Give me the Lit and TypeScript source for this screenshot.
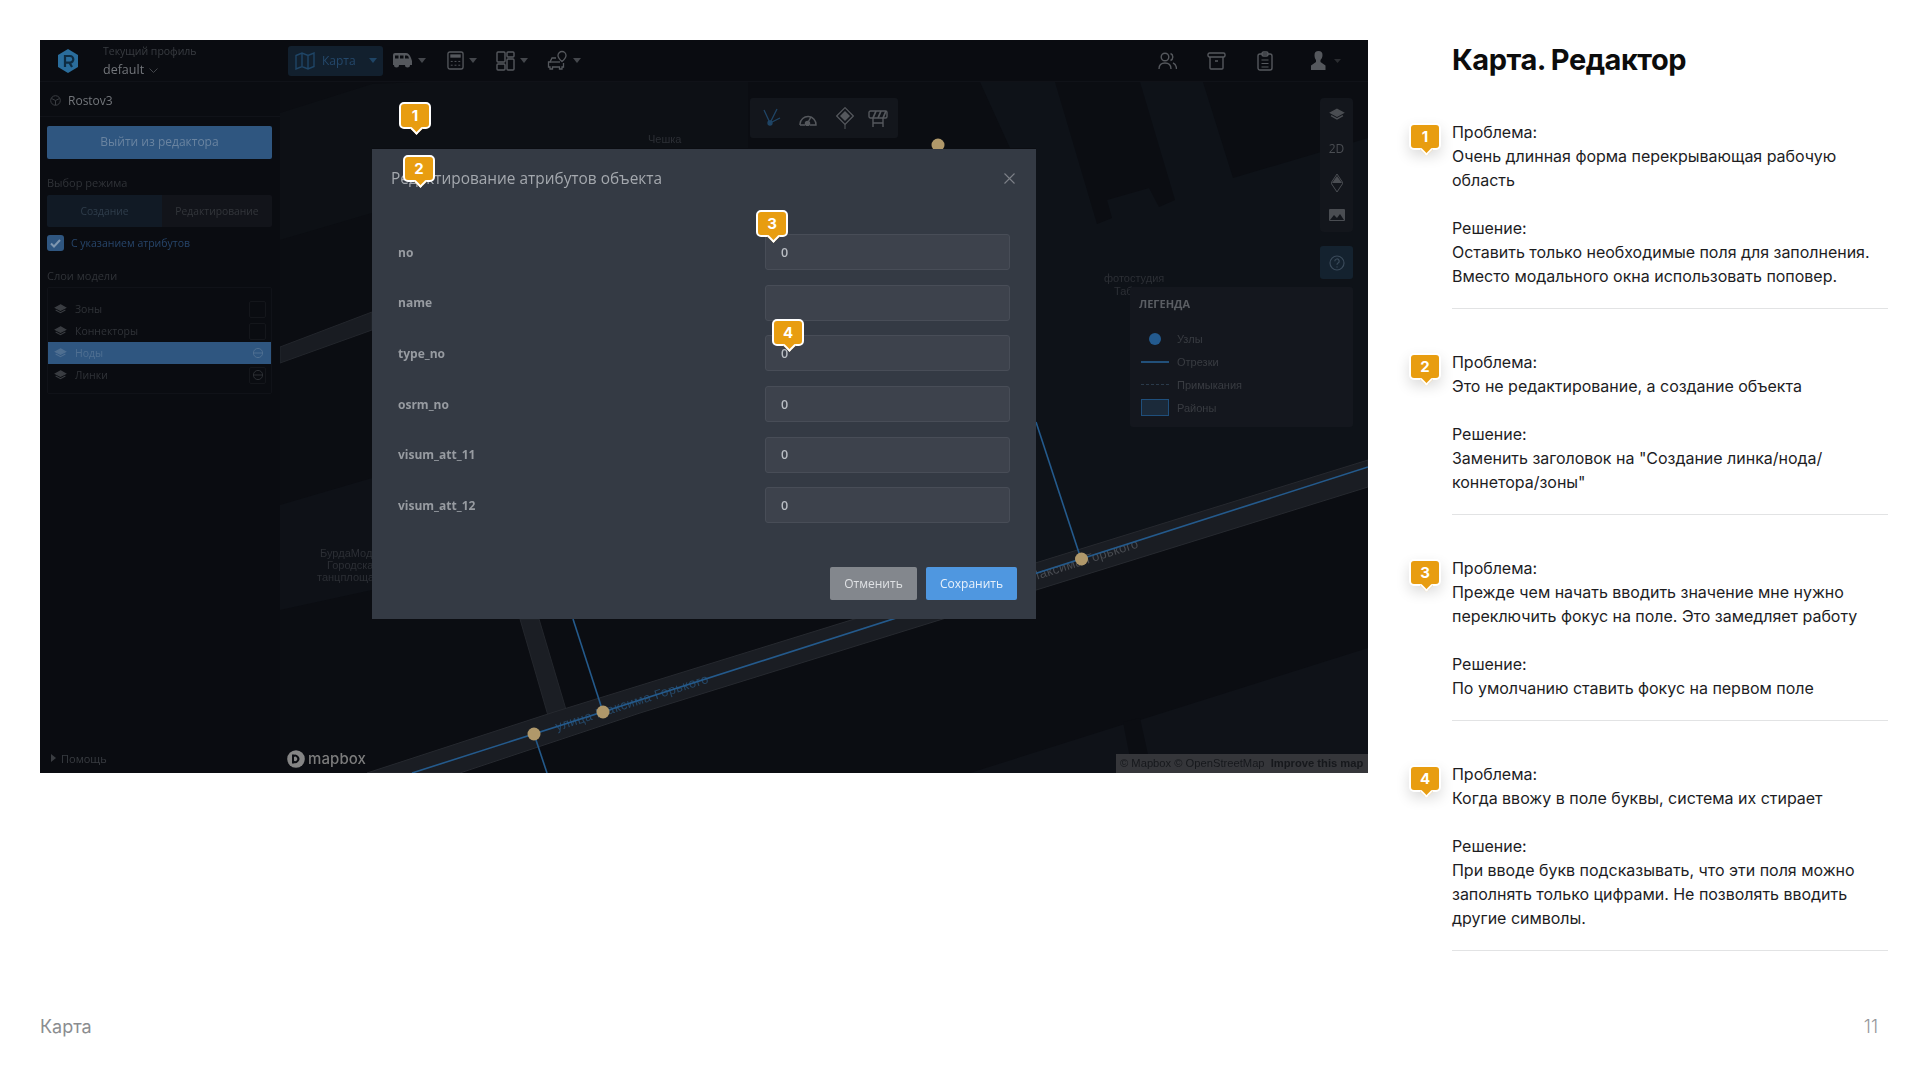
import { LitElement, html, css, svg } from "lit";
import { customElement } from "lit/decorators.js";

const SECTIONS = [
  { n: 1, lines: ["Проблема:", "Очень длинная форма перекрывающая рабочую", "область", "", "Решение:", "Оставить только необходимые поля для заполнения.", "Вместо модального окна использовать поповер."] },
  { n: 2, lines: ["Проблема:", "Это не редактирование, а создание объекта", "", "Решение:", "Заменить заголовок на \"Создание линка/нода/", "коннетора/зоны\""] },
  { n: 3, lines: ["Проблема:", "Прежде чем начать вводить значение мне нужно", "переключить фокус на поле. Это замедляет работу", "", "Решение:", "По умолчанию ставить фокус на первом поле"] },
  { n: 4, lines: ["Проблема:", "Когда ввожу в поле буквы, система их стирает", "", "Решение:", "При вводе букв подсказывать, что эти поля можно", "заполнять только цифрами. Не позволять вводить", "другие символы."] },
];

const FIELDS = [
  ["no", "0"], ["name", ""], ["type_no", "0"], ["osrm_no", "0"], ["visum_att_11", "0"], ["visum_att_12", "0"],
];

const LAYERS = [
  { name: "Зоны", sel: false, eye: false },
  { name: "Коннекторы", sel: false, eye: false },
  { name: "Ноды", sel: true, eye: true },
  { name: "Линки", sel: false, eye: true },
];

const layersIcon = (c: string, s = 14) => html`<svg width=${s} height=${s} viewBox="0 0 14 14" fill="none" stroke=${c} stroke-width="1.3"><path d="M7 2 L12.5 5 L7 8 L1.5 5 Z" fill=${c}/><path d="M1.8 7.6 L7 10.4 L12.2 7.6"/></svg>`;
const eyeIcon = (c: string) => html`<svg width="12" height="12" viewBox="0 0 12 12" fill="none" stroke=${c} stroke-width="1"><circle cx="6" cy="6" r="4.6"/><path d="M1.4 6h9.2"/></svg>`;
const caret = (c: string) => html`<svg class="caret" width="8" height="5" viewBox="0 0 8 5"><path d="M0 0h8L4 5z" fill=${c}/></svg>`;

const mapSvg = svg`
  <rect x="280" y="82" width="1088" height="691" fill="#0b0d12"/>
  <polygon points="280,113 372,84 420,82 748,82 748,148 372,148 372,213 280,240" fill="#0d1015"/>
  <polygon points="280,505 372,478 372,590 280,610" fill="#0e1117"/>
  <polygon points="980,82 1368,82 1368,460 1036,565 1036,148 1010,148" fill="#0e1218"/>
  <polygon points="1055,82 1140,82 1175,200 1159,207 1149,188 1107,200 1112,218 1097,224" fill="#0b0d12"/>
  <polygon points="1203,82 1233,178 1368,138 1368,82" fill="#0b0d12"/>
  <polygon points="1368,648 1140,720 1128,723 970,773 1368,773" fill="#0f1218"/>
  <polygon points="1123,722 1140,718 1152,773 1133,773" fill="#0b0d12"/>
  <polygon points="280,347 372,312 372,330 280,363" fill="#191c22" stroke="#23262c" stroke-width="1"/>
  <polygon points="520,619 539,619 567,713 549,719" fill="#1b1e24" stroke="#23262c" stroke-width="1"/>
  <polygon points="1368,460 551,713 367,773 460,773 640,713 1368,487" fill="#1a1d23" stroke="#26292f" stroke-width="1"/>
  <g font-family="'Liberation Sans',sans-serif" font-size="13">
    <text transform="translate(557 731) rotate(-17.7)" fill="#254766" letter-spacing=".5">улица Максима Горького</text>
    <text transform="translate(1030 582) rotate(-17.7)" fill="#484b51" letter-spacing=".3">Максима Горького</text>
  </g>
  <g stroke="#245a8c" stroke-width="1.6" fill="none">
    <path d="M1368 467 L412 773"/>
    <path d="M1036 422 L1081 559"/>
    <path d="M573 619 L603 712"/>
    <path d="M534 734 L547 773"/>
  </g>
  <g fill="#b0986a">
    <circle cx="1081.5" cy="559" r="6.5"/>
    <circle cx="603" cy="712" r="6.5"/>
    <circle cx="534" cy="734" r="6.5"/>
    <circle cx="938" cy="145" r="6.5"/>
  </g>
  <g font-family="'Liberation Sans',sans-serif" font-size="11" fill="#2c2f35">
    <text x="648" y="143">Чешка</text>
    <text x="1104" y="282">фотостудия</text>
    <text x="1114" y="295">Таб</text>
    <text x="320" y="557">БурдаМода</text>
    <text x="327" y="569">Городская</text>
    <text x="317" y="581">танцплощадка</text>
  </g>
`;

@customElement("app-root")
export class AppRoot extends LitElement {
  static styles = css`
    :host { display: block; }
    * { box-sizing: border-box; }
    .page { width: 1920px; height: 1080px; background: #fff; display: flex; flex-direction: column; padding: 40px 32px 0 40px; overflow: hidden; }
    .top { display: flex; flex: 1; min-height: 0; }
    .app { width: 1328px; height: 733px; flex: none; position: relative; background: #0b0d12; display: flex; flex-direction: column; overflow: hidden; font-family: "Open Sans", sans-serif; }
    .blur { filter: blur(.45px); display: flex; flex-direction: column; width: 100%; height: 100%; }

    .topbar { height: 42px; flex: none; background: #0a0c11; border-bottom: 1px solid #101218; display: flex; align-items: center; }
    .logo { width: 22px; margin-left: 18px; display: flex; }
    .profile { margin-left: 23px; width: 185px; line-height: 1; padding-top: 1px; }
    .profile .cap { font-size: 10.5px; color: #393c41; height: 15px; }
    .profile .def { font-size: 12.5px; color: #73767b; display: flex; align-items: center; gap: 5px; margin-top: 3px; }
    .nav { display: flex; align-items: center; height: 100%; }
    .karta { width: 95px; height: 30px; background: #12202e; border-radius: 3px; display: flex; align-items: center; padding-left: 7px; gap: 7px; color: #24486b; font-size: 12px; }
    .karta .caret { margin-left: 6px; }
    .nav-i { display: flex; align-items: center; gap: 5px; }
    .right-icons { margin-left: auto; display: flex; align-items: center; }

    .body { flex: 1; display: flex; min-height: 0; }
    .side { width: 240px; flex: none; background: #0a0c11; display: flex; flex-direction: column; padding-bottom: 7px; z-index: 1; }
    .rost { height: 35px; border-bottom: 1px solid #101218; display: flex; align-items: center; padding: 2px 0 0 10px; gap: 7px; font-size: 12px; color: #73767b; }
    .exit { margin: 9px 8px 0 7px; height: 33px; background: #2f5680; border-radius: 2px; display: flex; align-items: center; justify-content: center; padding-bottom: 2px; font-size: 12px; font-weight: 500; color: #6a84a0; }
    .lab { margin: 16px 0 0 7px; font-size: 11px; line-height: 16px; color: #303338; }
    .seg { margin: 4px 8px 0 7px; height: 32px; display: flex; font-size: 10.3px; border-radius: 2px; overflow: hidden; }
    .seg div { display: flex; align-items: center; justify-content: center; }
    .seg .a { width: 115px; background: #111a25; color: #2f3d4b; }
    .seg .b { flex: 1; background: #12141a; color: #33363b; }
    .chk { margin: 8px 0 0 7px; height: 16px; display: flex; align-items: center; gap: 7px; font-size: 10.5px; color: #27456a; }
    .box { width: 17px; height: 16px; border-radius: 3px; background: #2f5680; display: flex; align-items: center; justify-content: center; }
    .lab2 { margin-top: 17px; }
    .panel { margin: 3px 8px 0 7px; height: 107px; border: 1px solid #101218; border-radius: 2px; padding-top: 10px; }
    .row { height: 22px; display: flex; align-items: center; padding-left: 6px; gap: 8px; font-size: 10.5px; color: #303338; }
    .row.sel { background: #2f5680; color: #4f6f91; }
    .sq { margin-left: auto; margin-right: 5px; width: 17px; height: 17px; border: 1px solid #14161b; border-radius: 2px; display: flex; align-items: center; justify-content: center; }
    .row.sel .sq { border-color: transparent; }
    .help { margin-top: auto; padding-left: 11px; display: flex; align-items: center; gap: 5px; font-size: 11px; color: #393c41; height: 16px; }

    .map { flex: 1; position: relative; overflow: hidden; }
    .map > svg.bg { position: absolute; inset: 0; display: block; }
    .logo-mb { position: absolute; left: 7px; bottom: 5px; display: flex; align-items: center; gap: 3px; color: #7c7c7c; font: 500 15px "Inter", sans-serif; letter-spacing: .1px; }
    .attr { position: absolute; right: 0; bottom: 0; height: 19px; width: 252px; background: #35363a; color: #16181c; font: 11.2px/19px "Liberation Sans", sans-serif; padding-left: 4px; white-space: nowrap; }
    .attr b { margin-left: 3px; }
    .tool { position: absolute; left: 470px; top: 16px; width: 148px; height: 40px; background: #13161c; border-radius: 3px; display: flex; align-items: center; padding-left: 12px; }
    .rtool { position: absolute; left: 1040px; top: 16px; width: 33px; height: 134px; background: #13161c; border-radius: 4px; display: flex; flex-direction: column; align-items: center; justify-content: space-around; padding: 0 0 2px; color: #4a4d52; font-size: 12px; }
    .help-b { position: absolute; left: 1040px; top: 164px; width: 33px; height: 33px; background: #14222f; border-radius: 3px; display: flex; align-items: center; justify-content: center; }
    .legend { position: absolute; left: 850px; top: 205px; width: 223px; height: 140px; background: #14171e; border-radius: 3px; padding: 10px 9px; }
    .legend h4 { margin: 0 0 16px; font: 700 11px/14px "Open Sans", sans-serif; color: #5a5d63; }
    .lg { height: 23px; display: flex; align-items: center; font: 11px "Liberation Sans", sans-serif; color: #393c42; }
    .lg .k { width: 38px; display: flex; align-items: center; justify-content: center; padding-left: 2px; padding-right: 8px; flex: none; }
    .dot { width: 12px; height: 12px; border-radius: 50%; background: #235a8e; }
    .ln { width: 28px; height: 0; border-top: 2px solid #22507a; }
    .dsh { width: 28px; height: 0; border-top: 1px dashed #2a3a4a; }
    .rc { width: 28px; height: 17px; border: 1px solid #1f4f7c; background: #1b2a3a; }

    .modal { position: absolute; left: 92px; top: 67px; width: 664px; height: 470px; background: #343a44; display: flex; flex-direction: column; z-index: 2; }
    .mh { height: 85px; flex: none; display: flex; justify-content: space-between; padding: 19px 21px 0 19px; }
    .mt { font-size: 15.4px; line-height: 22px; font-weight: 500; color: #a4a8ae; }
    .fields { padding-left: 26px; padding-right: 26px; display: grid; grid-template-columns: 367px 245px; row-gap: 14.7px; align-items: center; }
    .fields label { font-size: 12px; font-weight: 700; color: #979ba1; }
    .inp { height: 36px; background: #3d424c; border: 1px solid #484d57; border-radius: 3px; display: flex; align-items: center; padding-left: 15px; font-size: 12.5px; font-weight: 600; color: #b8bcc2; }
    .btns { margin-top: 44px; padding-right: 19px; display: flex; justify-content: flex-end; gap: 9px; }
    .btn { height: 33px; display: flex; align-items: center; justify-content: center; font-size: 12px; font-weight: 500; border-radius: 2px; }
    .c { width: 87px; background: #83878d; color: #dfe1e4; }
    .s { width: 91px; background: #4f97e0; color: #e8f1fb; }

    .mk { position: absolute; width: 32px; height: 27px; background: #e89d10; border: 2px solid #fff; border-radius: 5px; color: #fff; font: 700 15px/23px "Inter", sans-serif; text-align: center; z-index: 5; }
    .mk::after { content: ""; position: absolute; left: 50%; bottom: -6px; width: 7px; height: 7px; margin-left: -3.5px; background: #e89d10; border-right: 2px solid #fff; border-bottom: 2px solid #fff; transform: rotate(45deg); box-sizing: content-box; }
    .mk span { position: relative; z-index: 1; }

    aside { margin-left: 84px; width: 436px; font-family: "Inter", sans-serif; color: #1d1d1f; }
    h1 { margin: 2px 0 42px; font: 700 29px/36px "Inter", sans-serif; color: #0c0c0c; letter-spacing: -.5px; word-spacing: -.5px; }
    .sec { position: relative; padding-bottom: 20px; border-bottom: 1.5px solid #e2e3e4; margin-bottom: 41px; font-size: 16px; line-height: 24px; letter-spacing: -.02px; }
    .sec .mk { left: -43px; top: 3px; box-shadow: 0 6px 14px rgba(0,0,0,.14); }
    .ln-t { height: 24px; white-space: nowrap; }
    .foot { height: 65px; padding-right: 10px; display: flex; justify-content: space-between; font: 18px/24px "Inter", sans-serif; color: #8b8d90; }
    .foot .pg { color: #94969a; font-weight: 300; }
  `;

  private mk(n: number, l: number | null = null, t: number | null = null) {
    const st = l === null ? "" : `left:${l}px;top:${t}px`;
    return html`<div class="mk" style=${st}><span>${n}</span></div>`;
  }

  render() {
    const g = "#55585d";
    return html`
      <div class="page">
        <div class="top">
          <div class="app">
            <div class="blur">
              <div class="topbar">
                <div class="logo">
                  <svg width="20" height="24" viewBox="0 0 20 24"><path d="M10 0 L20 6 V18 L10 24 L0 18 V6 Z" fill="#2a6d9c"/><path d="M7 18V7h5a3.2 3.2 0 0 1 0 6.6H8M11 13l3 5" stroke="#0e2c42" stroke-width="2.2" fill="none"/></svg>
                </div>
                <div class="profile">
                  <div class="cap">Текущий профиль</div>
                  <div class="def">default <svg width="9" height="5" viewBox="0 0 9 5" fill="none" stroke="#44474c"><path d="M.5.5 4.5 4.5 8.5.5"/></svg></div>
                </div>
                <div class="nav">
                  <div class="karta">
                    <svg width="20" height="18" viewBox="0 0 20 18" fill="none" stroke="#1f4566" stroke-width="1.4"><path d="M1 3.5 7 1l6 2.5L19 1v13.5L13 17l-6-2.5L1 17zM7 1v13.5M13 3.5V17"/></svg>
                    <span>Карта</span>${caret("#1f4566")}
                  </div>
                  <div class="nav-i" style="margin-left:9px">
                    <svg width="21" height="17" viewBox="0 0 21 17"><path d="M1 3q0-2 2-2h11q3 0 5 5l1 3v4h-2a2.5 2.5 0 0 1-5 0H7a2.5 2.5 0 0 1-5 0H1z" fill=${g}/><path d="M3 3.500h3.500v3H3zM8 3.500h3.500v3H8zM13 3.500h2q1.500 0 2 3h-4z" fill="#0a0c11"/></svg>${caret("#44474c")}
                  </div>
                  <div class="nav-i" style="margin-left:21px">
                    <svg width="17" height="19" viewBox="0 0 18 20" fill="none" stroke=${g} stroke-width="1.4"><rect x="1" y="1" width="16" height="18" rx="2"/><rect x="3.500" y="3.500" width="11" height="3.500" fill=${g} stroke="none"/><path d="M4 11h2M8 11h2M12 11h2M4 15h2M8 15h2M12 15h2" stroke-width="1"/></svg>${caret("#44474c")}
                  </div>
                  <div class="nav-i" style="margin-left:19px">
                    <svg width="19" height="20" viewBox="0 0 19 20" fill="none" stroke=${g} stroke-width="1.4"><rect x="1" y="1" width="8" height="10" rx="1"/><rect x="11" y="1" width="7" height="5" rx="1"/><rect x="1" y="13" width="8" height="6" rx="1"/><rect x="11" y="8" width="7" height="11" rx="1"/></svg>${caret("#44474c")}
                  </div>
                  <div class="nav-i" style="margin-left:19px">
                    <svg width="21" height="21" viewBox="0 0 21 21" fill="none" stroke=${g} stroke-width="1.3"><path d="M15 1.500a4 4 0 0 1 4 4c0 2.500-4 6-4 6s-4-3.500-4-6a4 4 0 0 1 4-4z"/><path d="M9 8H5L3 12H1.500v5H3v2h2.500v-2h7v2H15v-2h1.500v-4"/><path d="M3 12h10"/></svg>${caret("#44474c")}
                  </div>
                </div>
                <div class="right-icons">
                  <svg style="margin-right:30px" width="19" height="18" viewBox="0 0 19 18" fill="none" stroke=${g} stroke-width="1.4"><circle cx="7" cy="5" r="3.800"/><path d="M1 17c0-4 2.500-6 6-6s6 2 6 6M12.500 1.500a3.800 3.800 0 0 1 0 7M15 11c2 .8 3.500 3 3.500 6"/></svg>
                  <svg style="margin-right:31px" width="19" height="18" viewBox="0 0 19 18" fill="none" stroke=${g} stroke-width="1.4"><rect x="1" y="1" width="17" height="4" rx="1.500"/><path d="M3 5v11a1 1 0 0 0 1 1h11a1 1 0 0 0 1-1V5M8 9h3"/></svg>
                  <svg style="margin-right:37px" width="16" height="20" viewBox="0 0 16 20" fill="none" stroke=${g} stroke-width="1.4"><rect x="1" y="3" width="14" height="16" rx="2"/><rect x="5" y="1" width="6" height="4" rx="1.500"/><path d="M4.500 9h7M4.500 12.500h7M4.500 16h7" stroke-width="1"/></svg>
                  <svg style="margin-right:7px" width="17" height="19" viewBox="0 0 17 19"><path d="M8.500 0a4 4 0 0 1 4 4c0 2-.8 4-2 5v2l5 3.500V19H1v-4.500L6 11V9C5 8 4.500 6 4.500 4a4 4 0 0 1 4-4z" fill=${g}/></svg>
                  <svg style="margin-right:27px" width="7" height="4" viewBox="0 0 7 4"><path d="M0 0h7L3.500 4z" fill="#2a2c30"/></svg>
                </div>
              </div>
              <div class="body">
                <div class="side">
                  <div class="rost">
                    <svg width="11" height="11" viewBox="0 0 11 11" fill="none" stroke="#3a3d42"><circle cx="5.500" cy="5.500" r="4.800"/><path d="M1.500 3.500 5.500 5.500 9.500 3.500M5.500 5.500V10"/></svg>
                    <span>Rostov3</span>
                  </div>
                  <div class="exit">Выйти из редактора</div>
                  <div class="lab">Выбор режима</div>
                  <div class="seg"><div class="a">Создание</div><div class="b">Редактирование</div></div>
                  <div class="chk">
                    <div class="box"><svg width="11" height="9" viewBox="0 0 11 9" fill="none" stroke="#7f97b0" stroke-width="2"><path d="M1 4.500 4 7.500 10 1"/></svg></div>
                    <span>С указанием атрибутов</span>
                  </div>
                  <div class="lab lab2">Слои модели</div>
                  <div class="panel">
                    ${LAYERS.map((r) => html`
                      <div class="row ${r.sel ? "sel" : ""}">
                        ${layersIcon(r.sel ? "#4f6f91" : "#3a3d42", 13)}
                        <span>${r.name}</span>
                        <div class="sq">${r.eye ? eyeIcon(r.sel ? "#4f6f91" : "#2c2f34") : ""}</div>
                      </div>`)}
                  </div>
                  <div class="help">
                    <svg width="5" height="8" viewBox="0 0 5 8"><path d="M0 0l5 4-5 4z" fill="#3a3d42"/></svg>
                    <span>Помощь</span>
                  </div>
                </div>
                <div class="map">
                  <svg class="bg" width="1088" height="691" viewBox="280 82 1088 691">${mapSvg}</svg>
                  <div class="logo-mb">
                    <svg width="18" height="18" viewBox="0 0 18 18"><circle cx="9" cy="9" r="8.800" fill="#858585"/><path d="M6 4.500v9M6 6.500a3.200 3.200 0 1 1 0 4.800" stroke="#0b0d12" stroke-width="2" fill="none"/></svg>
                    <span>mapbox</span>
                  </div>
                  <div class="attr">© Mapbox © OpenStreetMap <b>Improve this map</b></div>
                  <div class="tool">
                    <svg width="20" height="20" viewBox="0 0 20 20" fill="none" stroke="#1f4566" stroke-width="1.300"><path d="M8 15 2 2M8 15 15 1M8 15 18 10"/><circle cx="8" cy="15" r="2" fill="#1f4566"/></svg>
                    <svg style="margin-left:16px" width="20" height="15" viewBox="0 0 20 15" fill="none" stroke=${g} stroke-width="1.500"><path d="M2 14a8.700 8.700 0 0 1 0-1 8 8 0 0 1 16 1h-6M2 14h5"/><path d="M9 13 13 6"/><circle cx="9.500" cy="12.500" r="2" fill=${g}/></svg>
                    <svg style="margin-left:18px" width="18" height="22" viewBox="0 0 18 22"><path d="M9 .7 17.300 9 9 17.300 .7 9z" fill="none" stroke=${g} stroke-width="1.200"/><path d="M9 4 14 9 9 14 4 9z" fill=${g}/><path d="M9 17.300V22" stroke=${g}/></svg>
                    <svg style="margin-left:14px" width="20" height="17" viewBox="0 0 20 17" fill="none" stroke=${g} stroke-width="1.400"><rect x="1" y="1" width="18" height="7" rx="1.500"/><path d="M5 8 8 1M10 8l3-7M15 8l3-7" stroke-width="1.800"/><path d="M5 8v9M15 8v9M5 13h10"/></svg>
                  </div>
                  <div class="rtool">
                    ${layersIcon("#4a4d52", 16)}
                    <span>2D</span>
                    <svg width="12" height="18" viewBox="0 0 12 18"><path d="M6 0 12 9 6 18 0 9z" fill="none" stroke="#4a4d52"/><path d="M6 2 11 9H1z" fill="#4a4d52"/></svg>
                    <svg width="16" height="12" viewBox="0 0 16 12"><rect width="16" height="12" rx="1" fill="#4a4d52"/><path d="M1 11l4-5 3 3 3-4 4 6z" fill="#13161c"/></svg>
                  </div>
                  <div class="help-b">
                    <svg width="16" height="16" viewBox="0 0 16 16" fill="none" stroke="#3a4a5a" stroke-width="1.200"><circle cx="8" cy="8" r="7"/><path d="M5.800 6.200a2.200 2.200 0 1 1 3.300 1.900c-.8.500-1.100.9-1.100 1.700M8 11.500v1"/></svg>
                  </div>
                  <div class="legend">
                    <h4>ЛЕГЕНДА</h4>
                    <div class="lg"><div class="k"><div class="dot"></div></div>Узлы</div>
                    <div class="lg"><div class="k"><div class="ln"></div></div>Отрезки</div>
                    <div class="lg"><div class="k"><div class="dsh"></div></div>Примыкания</div>
                    <div class="lg"><div class="k"><div class="rc"></div></div>Районы</div>
                  </div>
                  <div class="modal">
                    <div class="mh">
                      <div class="mt">Редактирование атрибутов объекта</div>
                      <svg style="margin-top:5px" width="11" height="11" viewBox="0 0 11 11" stroke="#7d8188" stroke-width="1.100"><path d="M.5.5l10 10M10.500.5l-10 10"/></svg>
                    </div>
                    <div class="fields">
                      ${FIELDS.map(([k, v]) => html`<label>${k}</label><div class="inp">${v}</div>`)}
                    </div>
                    <div class="btns">
                      <div class="btn c">Отменить</div>
                      <div class="btn s">Сохранить</div>
                    </div>
                  </div>
                </div>
              </div>
            </div>
            ${this.mk(1, 359, 62)}
            ${this.mk(2, 363, 115)}
            ${this.mk(3, 716, 170)}
            ${this.mk(4, 732, 279)}
          </div>
          <aside>
            <h1>Карта. Редактор</h1>
            ${SECTIONS.map((s) => html`
              <div class="sec">
                ${this.mk(s.n)}
                ${s.lines.map((l) => html`<div class="ln-t">${l}</div>`)}
              </div>`)}
          </aside>
        </div>
        <div class="foot"><span>Карта</span><span class="pg">11</span></div>
      </div>
    `;
  }
}
